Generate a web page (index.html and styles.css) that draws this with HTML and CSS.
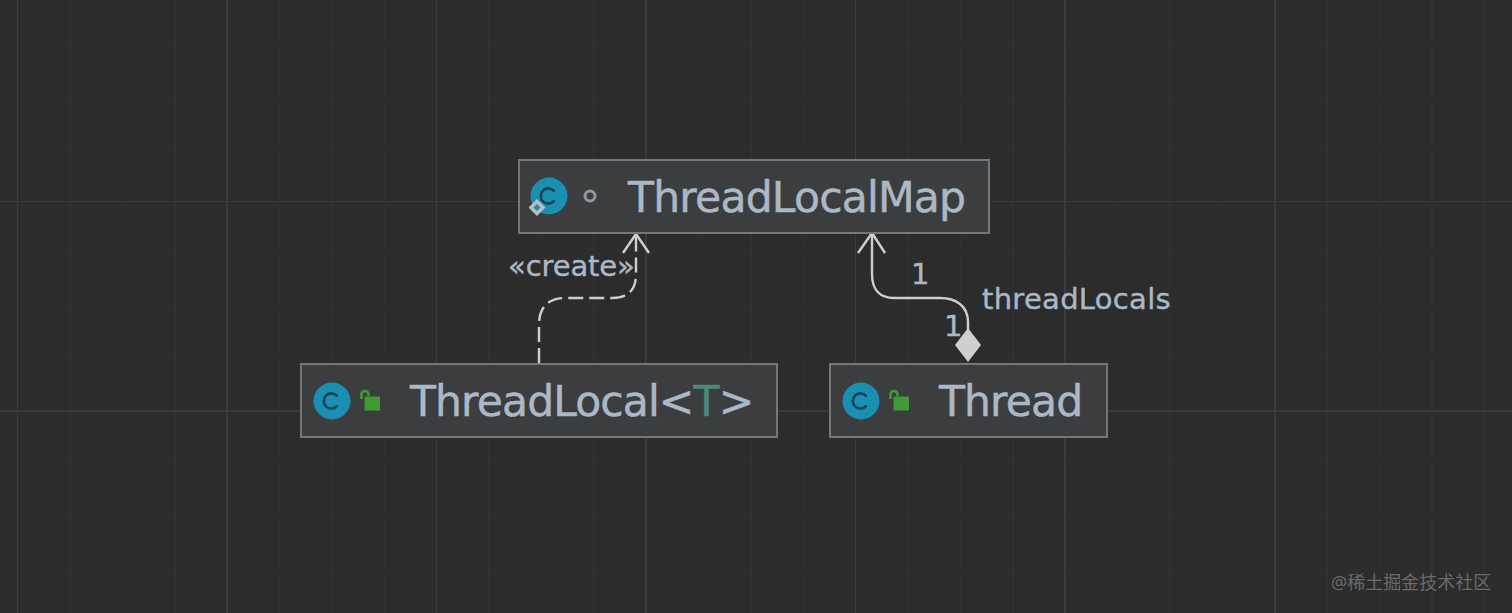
FILE: index.html
```html
<!DOCTYPE html>
<html lang="en">
<head>
<meta charset="utf-8">
<title>ThreadLocal diagram</title>
<link rel="stylesheet" href="styles.css">
</head>
<body>
<main class="canvas">
  <svg class="edges" width="1512" height="613" viewBox="0 0 1512 613" aria-hidden="true">
    <path class="edge dashed" d="M539 363V325C539 306 549 298 566 298H612C628 298 636 290 636 274V236"/>
    <path class="edge" d="M623 253L636 234L649 253"/>
    <path class="edge solid" d="M968 330V322C968 306 956 298 940 298H894C880 298 872 290 872 274V234"/>
    <path class="edge" d="M858 253L872 233L885 253"/>
    <path class="diamond" d="M968 328L981 345L968 362L955 345Z"/>
  </svg>

  <div class="node node-map">
    <svg class="icon-class" width="40" height="44" viewBox="0 0 40 44" aria-hidden="true">
      <circle cx="20" cy="20" r="18.500" class="disc"/>
      <path class="c-mark" d="M25.500 15.500A7.600 7.600 0 1 0 25.500 24.500"/>
      <path class="static-mark" d="M8 25.500L14 31.500L8 37.500L2 31.500Z"/>
    </svg>
    <svg class="icon-vis" width="24" height="24" viewBox="0 0 24 24" aria-hidden="true">
      <circle cx="12" cy="12" r="5" class="vis-ring"/>
    </svg>
    <span class="name">ThreadLocalMap</span>
  </div>

  <div class="node node-local">
    <svg class="icon-class" width="40" height="44" viewBox="0 0 40 44" aria-hidden="true">
      <circle cx="20" cy="22" r="18.500" class="disc"/>
      <path class="c-mark" d="M25.500 17.500A7.600 7.600 0 1 0 25.500 26.500"/>
    </svg>
    <svg class="icon-vis" width="24" height="24" viewBox="0 0 24 24" aria-hidden="true">
      <path class="lock-bow" d="M3.500 10V5.500A3.500 3.500 0 0 1 10.500 5.500V7"/>
      <rect class="lock-body" x="6.500" y="7.500" width="15.500" height="14"/>
    </svg>
    <span class="name">ThreadLocal&lt;<span class="type-param">T</span>&gt;</span>
  </div>

  <div class="node node-thread">
    <svg class="icon-class" width="40" height="44" viewBox="0 0 40 44" aria-hidden="true">
      <circle cx="20" cy="22" r="18.500" class="disc"/>
      <path class="c-mark" d="M25.500 17.500A7.600 7.600 0 1 0 25.500 26.500"/>
    </svg>
    <svg class="icon-vis" width="24" height="24" viewBox="0 0 24 24" aria-hidden="true">
      <path class="lock-bow" d="M3.500 10V5.500A3.500 3.500 0 0 1 10.500 5.500V7"/>
      <rect class="lock-body" x="6.500" y="7.500" width="15.500" height="14"/>
    </svg>
    <span class="name">Thread</span>
  </div>

  <span class="label label-create">«create»</span>
  <span class="label label-one-top">1</span>
  <span class="label label-one-bottom">1</span>
  <span class="label label-field">threadLocals</span>
  <span class="watermark">@稀土掘金技术社区</span>
</main>
</body>
</html>
```

FILE: styles.css
```css
html, body {
  margin: 0;
  padding: 0;
  background: #2c2c2c;
}

.canvas {
  position: relative;
  width: 1512px;
  height: 613px;
  overflow: hidden;
  font-family: "DejaVu Sans", "Noto Sans", sans-serif;
  background-color: #2c2c2c;
  background-image:
    repeating-linear-gradient(90deg, #3b3b3b 0 1.5px, transparent 1.5px 209.5px),
    repeating-linear-gradient(180deg, #393939 0 1.5px, transparent 1.5px 209.5px),
    repeating-linear-gradient(90deg, #303030 0 1.5px, transparent 1.5px 52.375px),
    repeating-linear-gradient(180deg, #2e2e2e 0 1px, transparent 1px 52.375px);
  background-size: 1676px 100%, 100% 838px, 1676px 100%, 100% 838px;
  background-position: -192.5px 0, 0 -8.5px, -192.5px 0, 0 -8.5px;
  background-repeat: no-repeat;
}

.edges {
  position: absolute;
  left: 0;
  top: 0;
}

.edge {
  fill: none;
  stroke: #cfcfcf;
  stroke-width: 2.4;
}

.dashed {
  stroke-dasharray: 15 6;
}

.diamond {
  fill: #cfcfcf;
}

.node {
  position: absolute;
  box-sizing: border-box;
  height: 75px;
  display: flex;
  align-items: center;
  background: #3c3d3e;
  border: 2px solid #75787a;
}

.node-map {
  left: 518px;
  top: 159px;
  width: 472px;
  padding-left: 9px;
}

.node-local {
  left: 300px;
  top: 363px;
  width: 478px;
  padding-left: 10px;
}

.node-thread {
  left: 829px;
  top: 363px;
  width: 279px;
  padding-left: 10px;
}

.icon-class {
  flex: none;
}

.icon-vis {
  flex: none;
}

.node-map .icon-class {
  margin-top: 2px;
}

.node-map .icon-vis {
  margin-left: 9px;
  margin-bottom: 2px;
}

.node-map .name {
  margin-left: 26px;
  letter-spacing: -0.8px;
}

.node-local .icon-vis,
.node-thread .icon-vis {
  margin-left: 6px;
}

.name {
  margin-left: 28px;
  margin-top: 3px;
  font-size: 42.5px;
  letter-spacing: -0.9px;
  line-height: 1;
  white-space: nowrap;
  color: #abb8c6;
  -webkit-text-stroke: 0.5px #abb8c6;
}

.type-param {
  color: #4a8a7c;
  -webkit-text-stroke-color: #4a8a7c;
}

.disc {
  fill: #1a8fb2;
}

.c-mark {
  fill: none;
  stroke: #16425a;
  stroke-width: 2.6;
}

.static-mark {
  fill: #1a8fb2;
  stroke: #b9bfbf;
  stroke-width: 3.5;
}

.vis-ring {
  fill: none;
  stroke: #8f9a9a;
  stroke-width: 3;
}

.lock-bow {
  fill: none;
  stroke: #3f9c35;
  stroke-width: 2.6;
}

.lock-body {
  fill: #3f9c35;
}

.label {
  position: absolute;
  font-size: 29px;
  letter-spacing: 0.3px;
  line-height: 34px;
  white-space: nowrap;
  color: #abb8c6;
  -webkit-text-stroke: 0.4px #abb8c6;
}

.label-create {
  left: 508px;
  top: 249px;
  letter-spacing: -0.1px;
}

.label-one-top {
  left: 911px;
  top: 257px;
}

.label-one-bottom {
  left: 944px;
  top: 309px;
}

.label-field {
  left: 982px;
  top: 282px;
}

.watermark {
  position: absolute;
  left: 1331px;
  top: 571px;
  font-family: "Noto Sans", "Noto Sans CJK SC", sans-serif;
  font-size: 18px;
  line-height: 23px;
  white-space: nowrap;
  color: #6a6a6a;
}
```
